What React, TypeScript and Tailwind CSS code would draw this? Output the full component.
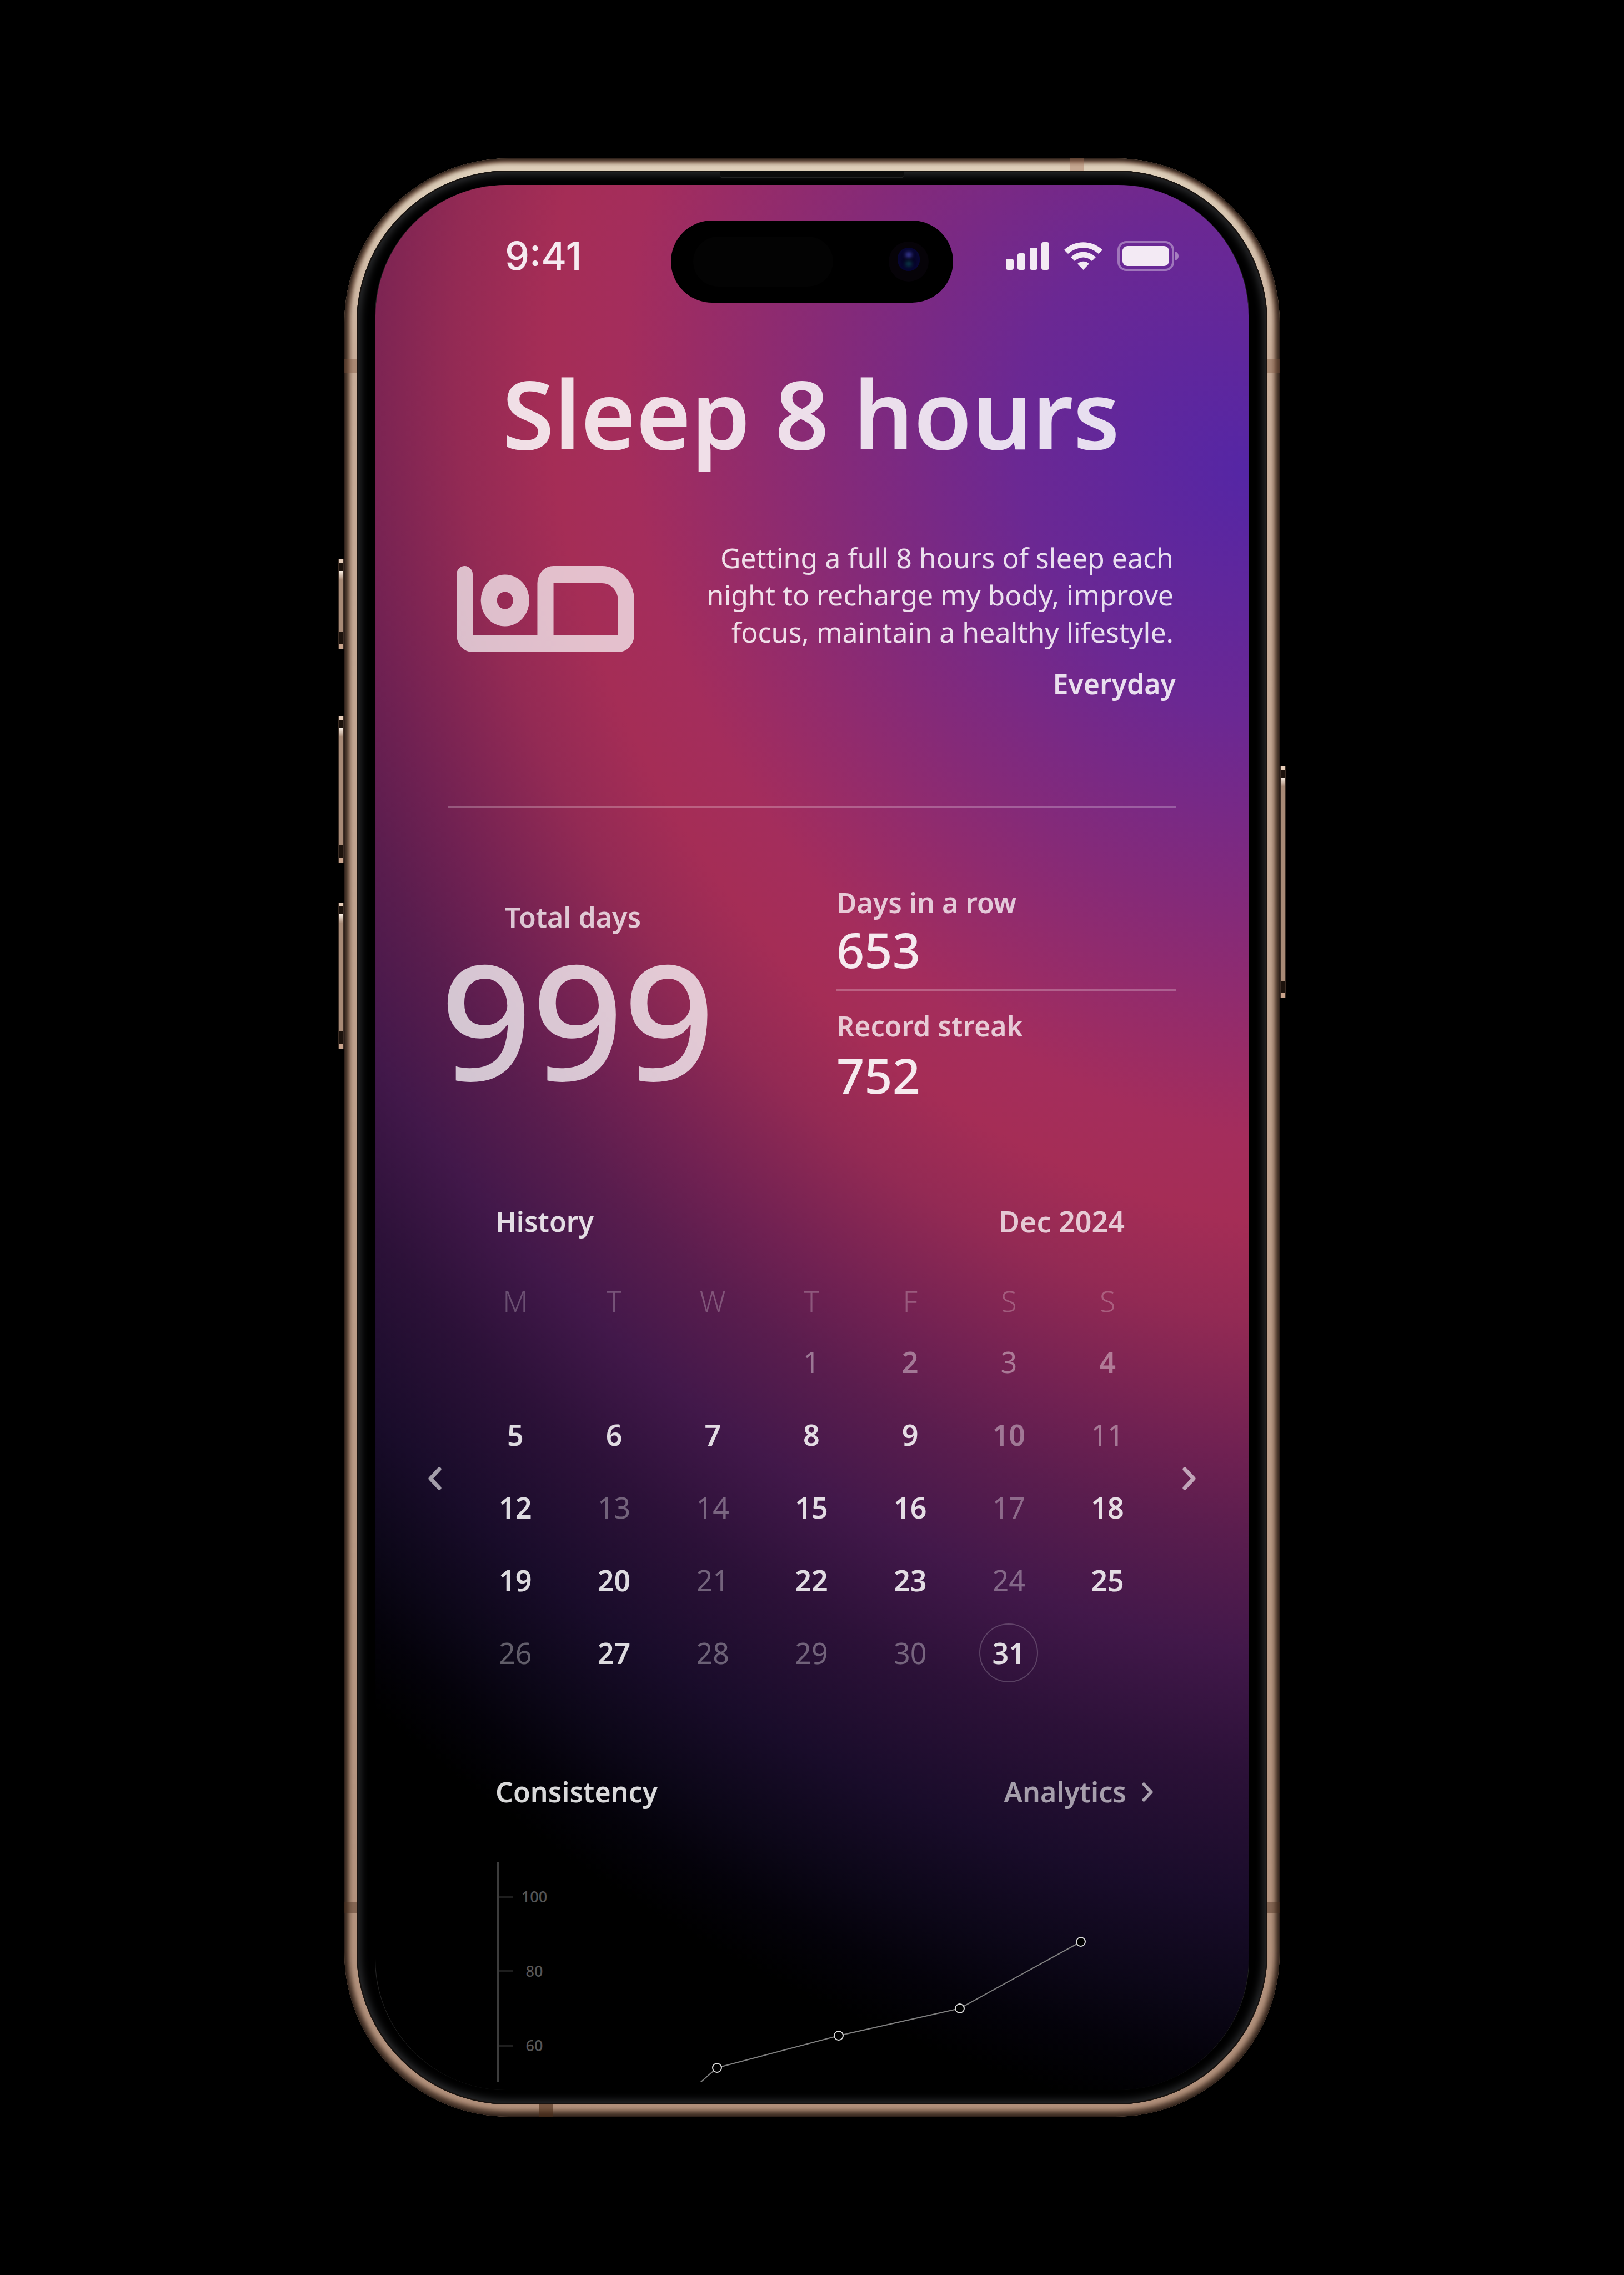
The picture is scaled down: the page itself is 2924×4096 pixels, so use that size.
import React from "react";

type Tone = "done" | "missed" | "past" | "pastBold" | "today";
type Day = { n: number; tone: Tone } | null;

const tones = {
  done: "font-semibold text-white/85",
  missed: "font-normal text-white/35",
  past: "font-normal text-white/40",
  pastBold: "font-semibold text-white/40",
  today: "font-semibold text-white/85",
};

const d = (n: number, tone: Tone): Day => ({ n, tone });

const weekdays = ["M", "T", "W", "T", "F", "S", "S"];

const weeks: Day[][] = [
  [null, null, null, d(1, "past"), d(2, "pastBold"), d(3, "past"), d(4, "pastBold")],
  [d(5, "done"), d(6, "done"), d(7, "done"), d(8, "done"), d(9, "done"), d(10, "pastBold"), d(11, "past")],
  [d(12, "done"), d(13, "missed"), d(14, "missed"), d(15, "done"), d(16, "done"), d(17, "missed"), d(18, "done")],
  [d(19, "done"), d(20, "done"), d(21, "missed"), d(22, "done"), d(23, "done"), d(24, "missed"), d(25, "done")],
  [d(26, "missed"), d(27, "done"), d(28, "missed"), d(29, "missed"), d(30, "missed"), d(31, "today"), null],
];

const points = [
  [397, 370],
  [616, 312],
  [834, 263],
  [1052, 143],
];

const ticks = [
  { y: 62, label: "100" },
  { y: 196, label: "80" },
  { y: 330, label: "60" },
];

function SideButton({ className }: { className: string }) {
  return (
    <div className={"absolute flex w-3 flex-col bg-[#3a2c24] px-[2px] " + className}>
      <div className="h-[7px] bg-[#e6cdb9]" />
      <div className="h-[14px] bg-[#1c120c]" />
      <div className="h-[16px] bg-linear-to-b from-[#fbf1e6] to-[#a88a76]" />
      <div className="grow bg-[#a88a76]" />
      <div className="h-[22px] bg-[#1c120c]" />
      <div className="h-[9px] bg-[#c9a48c]" />
    </div>
  );
}

function StatusIcons() {
  return (
    <svg viewBox="0 0 312 54" className="h-[54px] w-[312px] text-[#f3eaf4]" fill="currentColor" aria-hidden="true">
      <rect x="0" y="32" width="14" height="20" rx="4" />
      <rect x="21" y="22" width="14" height="30" rx="4" />
      <rect x="43" y="12" width="14" height="40" rx="4" />
      <rect x="64" y="2" width="14" height="50" rx="4" />
      <path d="M105 16 A50 50 0 0 1 174 16 L167 23 A40 40 0 0 0 112 23 Z" />
      <path d="M117 29 A32 32 0 0 1 162 29 L155 36 A22 22 0 0 0 124 36 Z" />
      <path d="M129 41 A15 15 0 0 1 150 41 L139.500 52 Z" />
      <rect x="203" y="2" width="98" height="50" rx="14" fill="none" stroke="currentColor" strokeWidth="4" opacity="0.4" />
      <rect x="210" y="9" width="84" height="36" rx="9" />
      <path d="M305 19 Q311 21 311 27 Q311 33 305 35 Z" opacity="0.45" />
    </svg>
  );
}

function BedIcon() {
  return (
    <svg viewBox="0 0 11 5" preserveAspectRatio="none" className="h-[155px] w-[320px]" fill="white" fillOpacity="0.7" aria-hidden="true">
      <path
        fillRule="evenodd"
        d="M0 .5a.5 .5 0 0 1 1 0V4H5V1a1 1 0 0 1 1-1H9a2 2 0 0 1 2 2V4a1 1 0 0 1-1 1H1a1 1 0 0 1-1-1ZM6 1V4H10V2A1 1 0 0 0 9 1Z"
      />
      <path fillRule="evenodd" d="M3 .5a1.500 1.500 0 0 1 0 3a1.500 1.500 0 0 1 0-3ZM3 1.500a.5 .5 0 0 0 0 1a.5 .5 0 0 0 0-1Z" />
    </svg>
  );
}

function Chevron({ className, flip }: { className: string; flip?: boolean }) {
  return (
    <svg viewBox="0 0 24 42" className={className} fill="none" stroke="currentColor" strokeWidth="7" strokeLinecap="round" strokeLinejoin="round" aria-hidden="true">
      <path d={flip ? "M20 4 4 21 20 38" : "M4 4 20 21 4 38"} />
    </svg>
  );
}

function Chart() {
  return (
    <svg viewBox="0 0 1223 395" className="block h-auto w-full" role="img" aria-label="Consistency chart">
      <rect x="0" y="0" width="4" height="395" fill="#3d3d3d" />
      {ticks.map((t) => (
        <g key={t.label}>
          <rect x="4" y={t.y - 2} width="26" height="4" fill="#1e1e1e" />
          <text x="68" y={t.y + 10} textAnchor="middle" fill="#565656" fontSize="27" fontWeight="500">
            {t.label}
          </text>
        </g>
      ))}
      <path d={"M365 398 " + points.map((p) => `L${p[0]} ${p[1]}`).join(" ")} fill="none" stroke="#808080" strokeWidth="2" />
      {points.map((p) => (
        <circle key={p[0]} cx={p[0]} cy={p[1]} r="8" fill="#000" stroke="#dcdcdc" strokeWidth="2" />
      ))}
    </svg>
  );
}

export default function App() {
  return (
    <div className="flex min-h-screen items-center justify-center bg-black font-['Noto_Sans',sans-serif] text-[50px] leading-[64px]">
      <div className="relative w-full max-w-[1684px]">
        <SideButton className="-left-3 top-[722px] h-[162px]" />
        <SideButton className="-left-3 top-[1005px] h-[263px]" />
        <SideButton className="-left-3 top-[1340px] h-[263px]" />
        <SideButton className="-right-3 top-[1094px] h-[418px]" />

        <div className="relative overflow-hidden rounded-[296px] bg-linear-to-b from-[#ded0bb] via-[#c8ad99] via-10% to-[#b08f7a] p-[22px] shadow-[inset_0_0_4px_1px_#1c130e,inset_0_-2px_5px_6px_#4b382d,inset_0_-2px_6px_11px_#7d6251]">
          <div className="absolute left-0 top-[362px] h-[25px] w-[22px] bg-[#7a523c]/40" />
          <div className="absolute right-0 top-[362px] h-[25px] w-[22px] bg-[#7a523c]/40" />
          <div className="absolute bottom-[366px] left-0 h-[21px] w-[22px] bg-[#4a2e1e]/45" />
          <div className="absolute bottom-[366px] right-0 h-[21px] w-[22px] bg-[#4a2e1e]/45" />
          <div className="absolute right-[353px] top-0 h-[22px] w-[25px] bg-[#a36f55]/40" />
          <div className="absolute bottom-0 left-[351px] h-[22px] w-[25px] bg-[#4a2c18]/60" />

          <div className="relative rounded-[274px] bg-black px-[33px] py-[26px] shadow-[inset_0_0_0_2px_#17120f,inset_0_0_14px_8px_#28292b]">
            <div className="absolute inset-x-[654px] top-0 h-[14px] rounded-b-md border-b-2 border-[#222] bg-[#0c0c0c]" />

            <main className="relative overflow-hidden rounded-[236px] border-x border-white/15 bg-black">
              <div className="absolute -right-[3152px] -top-[2146px] h-[5328px] w-[6304px] rotate-[58.400deg] bg-[radial-gradient(closest-side,#5526a5_0%,#6b2893_15%,#852a78_27%,#a42d5c_40%,#a52d56_45%,#932a54_51%,#702152_59%,#5a1d4e_64%,#42184a_71%,#2c1138_78%,#190c2a_86%,#0c0718_92%,#04020a_96%,#000_100%)]" />

              <div className="relative pb-[15px]">
                <div className="grid grid-cols-[1fr_508px_1fr] pt-16">
                  <div className="flex items-center pb-5 pl-[233px] font-['Inter',sans-serif] text-[70px] font-medium text-[#f6eaf0]">9:41</div>
                  <div className="flex h-[148px] items-center justify-between rounded-full bg-black pl-10 pr-11">
                    <div className="h-[90px] w-[252px] rounded-full bg-[#030303]" />
                    <div className="flex h-[72px] w-[72px] items-center justify-center rounded-full bg-[#060308] pb-2">
                      <div className="flex h-[42px] w-[40px] flex-col items-center justify-center gap-[6px] rounded-full bg-radial from-[#050318] to-[#070640]">
                        <div className="h-[10px] w-[12px] rounded-full bg-[#3a3c9c] blur-[3px]" />
                        <div className="h-[10px] w-[12px] rounded-full bg-[#0a3a48] blur-[3px]" />
                      </div>
                    </div>
                  </div>
                  <div className="flex items-center justify-end pb-5 pr-[125px]">
                    <StatusIcons />
                  </div>
                </div>

                <h1 className="mt-[98px] pl-[228px] text-[170px] font-semibold leading-[200px] text-white/85">Sleep 8 hours</h1>

                <section className="mt-32 flex justify-between px-[131px]">
                  <div className="pl-[15px] pt-12">
                    <BedIcon />
                  </div>
                  <div className="text-right leading-[67px] text-white/85">
                    <p className="pr-1">
                      Getting a full 8 hours of sleep each
                      <br />
                      night to recharge my body, improve
                      <br />
                      focus, maintain a healthy lifestyle.
                    </p>
                    <p className="mt-[26px] font-semibold">Everyday</p>
                  </div>
                </section>

                <hr className="mx-[131px] mt-[186px] border-t-4 border-white/25" />

                <section className="mt-[138px] flex justify-between px-[131px]">
                  <div className="pt-[26px] text-white/75">
                    <h2 className="pl-[102px] font-semibold">Total days</h2>
                    <p className="-ml-3.5 mt-[6px] text-[288px] font-medium leading-[288px]">999</p>
                  </div>
                  <div className="w-[611px]">
                    <h2 className="font-semibold text-white/75">Days in a row</h2>
                    <p className="mt-1 text-[88px] font-medium leading-[96px] text-white/90">653</p>
                    <hr className="mt-6 border-t-4 border-white/25" />
                    <h2 className="mt-[30px] font-semibold text-white/75">Record streak</h2>
                    <p className="mt-2 text-[88px] font-medium leading-[96px] text-white/90">752</p>
                  </div>
                </section>

                <section>
                  <div className="mt-[184px] flex justify-between pl-[216px] pr-[223px] font-semibold">
                    <h2 className="text-white/85">History</h2>
                    <p className="text-[52px] text-white/75">Dec 2024</p>
                  </div>
                  <div className="mt-[79px] flex items-center justify-between px-[95px] text-[52px] text-white/60">
                    <button type="button" aria-label="Previous month" className="pb-7">
                      <Chevron flip className="h-[42px] w-6" />
                    </button>
                    <table className="ml-11 mr-[46px] grow table-fixed text-center">
                      <thead>
                        <tr className="h-[76px] align-top text-white/25">
                          {weekdays.map((w, i) => (
                            <th key={i} scope="col" className="p-0 font-light">
                              {w}
                            </th>
                          ))}
                        </tr>
                      </thead>
                      <tbody>
                        {weeks.map((week, i) => (
                          <tr key={i} className="h-[131px]">
                            {week.map((day, j) => (
                              <td key={j} className="p-0">
                                {day && (
                                  <span
                                    className={
                                      "inline-flex h-[106px] w-[106px] items-center justify-center rounded-full border-2 " +
                                      tones[day.tone] +
                                      (day.tone === "today" ? " border-white/20" : " border-transparent")
                                    }
                                  >
                                    {day.n}
                                  </span>
                                )}
                              </td>
                            ))}
                          </tr>
                        ))}
                      </tbody>
                    </table>
                    <button type="button" aria-label="Next month" className="pb-7">
                      <Chevron className="h-[42px] w-6" />
                    </button>
                  </div>
                </section>

                <section>
                  <div className="mt-[153px] flex justify-between pl-[216px] pr-[172px] font-semibold">
                    <h2 className="text-white/85">Consistency</h2>
                    <a href="#analytics" className="flex items-center gap-7 text-white/60">
                      Analytics
                      <Chevron className="h-[35px] w-5" />
                    </a>
                  </div>
                  <div className="mt-[95px] pl-[218px] pr-[131px]">
                    <Chart />
                  </div>
                </section>
              </div>
            </main>
          </div>
        </div>
      </div>
    </div>
  );
}
